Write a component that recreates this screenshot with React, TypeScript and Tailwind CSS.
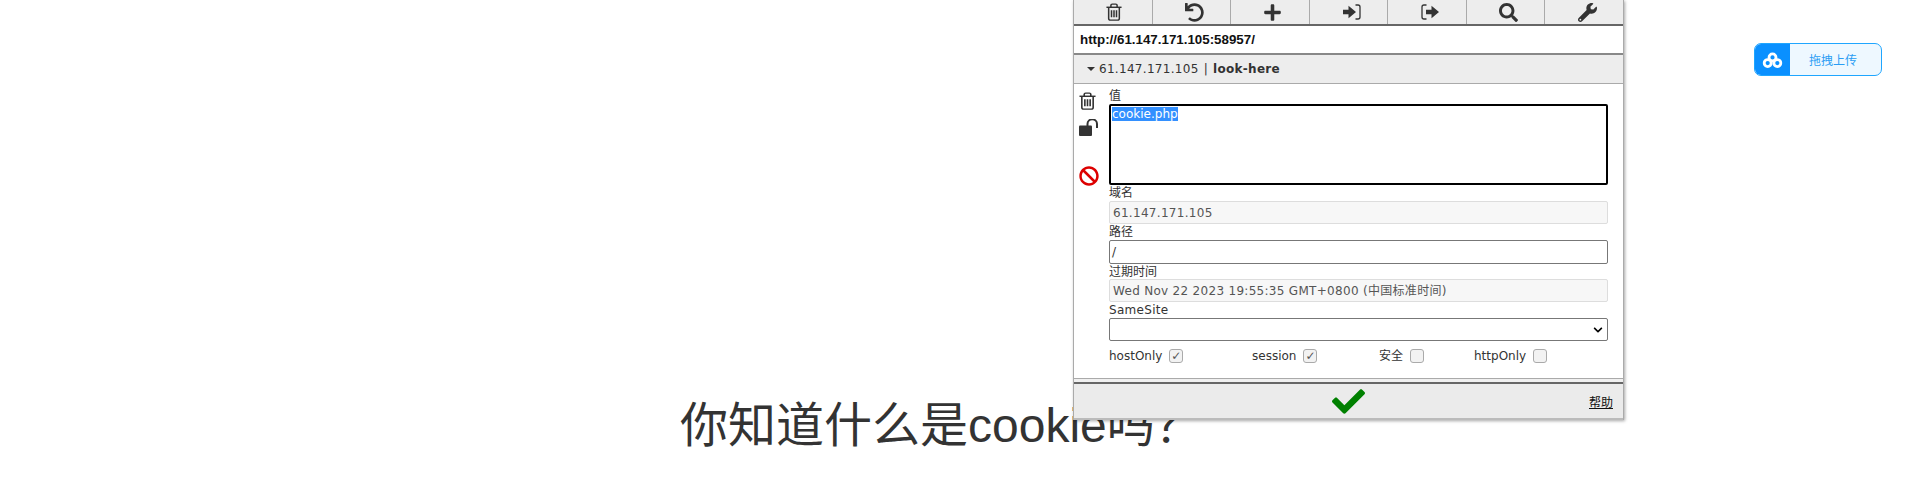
import React from "react";
import { FaSearch, FaWrench, FaPlus, FaUndo, FaBan, FaCheck, FaChevronDown } from "react-icons/fa";

const ui = "font-['DejaVu_Sans','Noto_Sans_CJK_SC',sans-serif]";

function Label({ children, h = "h-[16px]" }: { children: React.ReactNode; h?: string }) {
  return <div className={`${h} text-[12px] leading-[17px] text-[#333]`}>{children}</div>;
}

function Check({ checked }: { checked?: boolean }) {
  return (
    <span className="ml-[7px] flex h-[14px] w-[14px] items-center justify-center rounded-[3px] border border-[#aaa] bg-[#f2f2f2] text-[12px] font-bold leading-none text-[#555]">
      {checked ? "✓" : ""}
    </span>
  );
}

function Trash({ className }: { className: string }) {
  return (
    <svg viewBox="0 0 18 21" className={className} fill="none" stroke="#333" strokeWidth="1.7" preserveAspectRatio="none">
      <path d="M0.5 5h17" />
      <path d="M5.5 5V2.8a1.5 1.5 0 0 1 1.5-1.5h4a1.5 1.5 0 0 1 1.5 1.5V5" />
      <path d="M3 5v13a2 2 0 0 0 2 2h8a2 2 0 0 0 2-2V5" />
      <path d="M6.2 8.5v8M9 8.5v8M11.8 8.5v8" />
    </svg>
  );
}

function SignIn() {
  return (
    <svg viewBox="0 0 18 16" className="h-[16px] w-[18px]">
      <path d="M0 5.8h5.5V1.8L13 8l-7.5 6.2v-4H0z" fill="#333" />
      <path d="M12.5 1h2.5a2 2 0 0 1 2 2v10a2 2 0 0 1-2 2h-2.5" fill="none" stroke="#333" strokeWidth="1.3" />
    </svg>
  );
}

function SignOut() {
  return (
    <svg viewBox="0 0 18 16" className="h-[16px] w-[18px]">
      <path d="M5 5.8h5.5V1.8L18 8l-7.5 6.2v-4H5z" fill="#333" />
      <path d="M5.5 1H3a2 2 0 0 0-2 2v10a2 2 0 0 0 2 2h2.5" fill="none" stroke="#333" strokeWidth="1.3" />
    </svg>
  );
}

function Lock() {
  return (
    <svg viewBox="0 0 20 17" className="h-[17px] w-[20px]">
      <rect x="0" y="6.5" width="13" height="10.5" rx="1" fill="#333" />
      <path d="M8.5 7V5a4.5 4.5 0 0 1 9.5 0v4" fill="none" stroke="#333" strokeWidth="2" />
    </svg>
  );
}

export default function App() {
  const tools = [
    <Trash key="t" className="mr-[4px] h-[18px] w-[16px]" />,
    <FaUndo key="u" />,
    <FaPlus key="p" />,
    <SignIn key="i" />,
    <SignOut key="o" />,
    <FaSearch key="s" />,
    <FaWrench key="w" />,
  ];
  return (
    <div className="relative h-[498px] w-full overflow-hidden bg-white">
      <h1 className="pl-[680px] pt-[396px] font-['Liberation_Sans','Noto_Sans_CJK_SC',sans-serif] text-[48px] leading-[60px] font-normal text-[#333]">
        你知道什么是cookie吗？
      </h1>

      <div className={`absolute left-[1073px] top-0 flex h-[420px] w-[551px] flex-col border-x border-[#aaa] bg-white shadow-[1px_1px_3px_rgba(0,0,0,0.35)] ${ui}`}>
        <div className="flex h-[26px] shrink-0 border-b-2 border-[#666] bg-[#ededed]">
          {tools.map((icon, i) => (
            <div key={i} className="flex flex-1 items-center justify-center border-r border-[#aaa] pl-[6px] text-[19px] text-[#333] last:border-r-0">
              {icon}
            </div>
          ))}
        </div>
        <div className="flex h-[29px] shrink-0 items-center border-b-2 border-[#888] px-[6px] font-['Liberation_Sans',sans-serif] text-[13.33px] font-bold text-[#111]">
          http://61.147.171.105:58957/
        </div>
        <div className="flex h-[29px] shrink-0 items-center border-b border-[#aaa] bg-[#ededed] pl-[13px] text-[12px] tracking-[0.3px] text-[#333]">
          <span className="mr-[4px] h-0 w-0 border-x-[4px] border-t-[4px] border-x-transparent border-t-[#333]" />
          <span>61.147.171.105</span>
          <span className="mx-[5px]">|</span>
          <span className="font-bold">look-here</span>
        </div>
        <div className="flex flex-1 pt-[4px]">
          <div className="flex w-[35px] shrink-0 flex-col items-start pl-[5px] pt-[4px]">
            <Trash className="h-[18px] w-[17px]" />
            <div className="mt-[9px]"><Lock /></div>
            <FaBan className="mt-[30px] text-[20px] text-[#d00]" />
          </div>
          <div className="w-[499px] text-[12px] text-[#333]">
            <Label>值</Label>
            <div className="h-[81px] rounded-[2px] border-2 border-black px-[1px] pt-[1px] text-[12px] leading-[15px]">
              <span className="bg-[#3390ff] text-white">cookie.php</span>
            </div>
            <Label>域名</Label>
            <div className="flex h-[23px] items-center rounded-[2px] border border-[#ddd] bg-[#f7f7f7] px-[3px] tracking-[0.3px] text-[#555]">61.147.171.105</div>
            <Label>路径</Label>
            <div className="flex h-[24px] items-center rounded-[2px] border border-[#777] px-[2px]">/</div>
            <Label h="h-[15px]">过期时间</Label>
            <div className="flex h-[23px] items-center rounded-[2px] border border-[#ddd] bg-[#f7f7f7] px-[3px] tracking-[0.3px] text-[#555]">Wed Nov 22 2023 19:55:35 GMT+0800 (中国标准时间)</div>
            <Label><span className="tracking-[0.3px]">SameSite</span></Label>
            <div className="flex h-[23px] items-center justify-end rounded-[2px] border border-[#777] pr-[4px] text-[10px] text-black">
              <FaChevronDown />
            </div>
            <div className="mt-[7px] flex h-[15px] items-center">
              <div className="flex w-[143px] items-center">hostOnly<Check checked /></div>
              <div className="flex w-[127px] items-center">session<Check checked /></div>
              <div className="flex w-[95px] items-center">安全<Check /></div>
              <div className="flex items-center">httpOnly<Check /></div>
            </div>
          </div>
        </div>
        <div className="h-[4px] shrink-0 border-t border-[#aaa] bg-[#f0f0f0]" />
        <div className="relative flex h-[38px] shrink-0 items-center justify-center border-y-2 border-t-[#666] border-b-[#bbb] bg-[#ebebeb]">
          <FaCheck className="text-[33px] text-[#008000]" />
          <span className="absolute right-[10px] top-[13px] text-[12px] leading-none text-[#111] underline">帮助</span>
        </div>
      </div>

      <div className="absolute left-[1754px] top-[43px] flex h-[33px] w-[128px] overflow-hidden rounded-[7px] border border-[#1fa6ff] bg-[#eef8ff]">
        <div className="flex w-[35px] items-center justify-center bg-[#0a90ff]">
          <svg viewBox="0 0 24 20" className="h-[18px] w-[21px]" fill="none" stroke="#fff" strokeWidth="3.2">
            <circle cx="12" cy="7" r="4" />
            <circle cx="6.5" cy="13.5" r="4" />
            <circle cx="17.5" cy="13.5" r="4" />
          </svg>
        </div>
        <div className="flex flex-1 items-center justify-center pr-[5px] font-['Noto_Sans_CJK_SC',sans-serif] text-[12px] text-[#2a9df4]">拖拽上传</div>
      </div>
    </div>
  );
}
